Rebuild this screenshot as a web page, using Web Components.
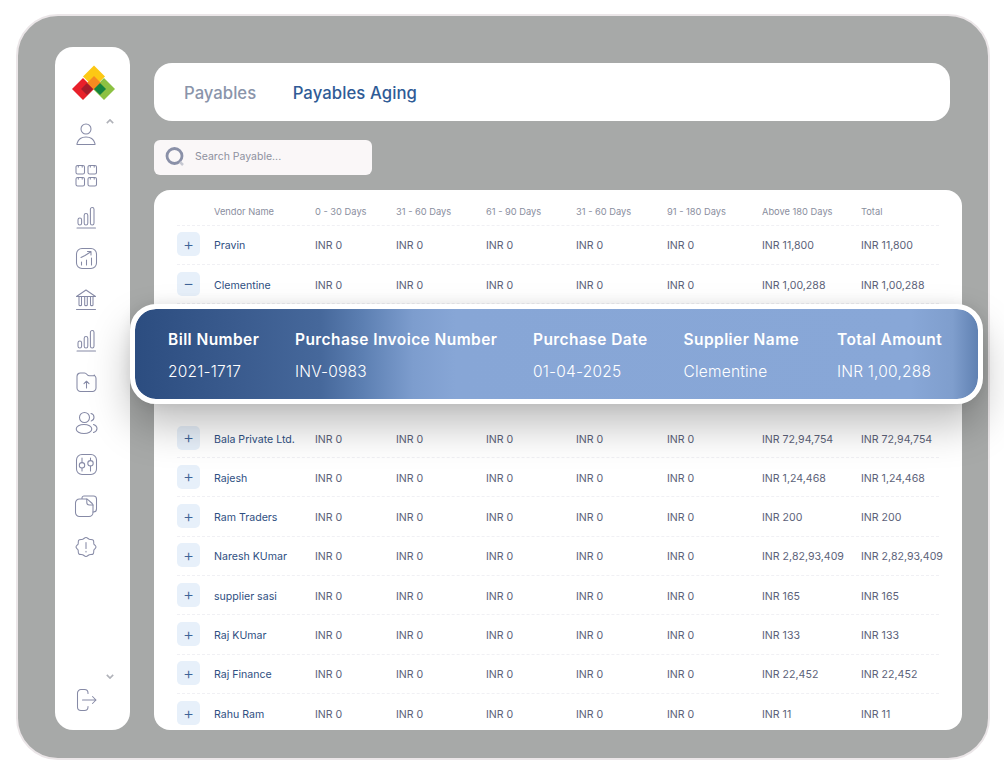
<!DOCTYPE html>
<html lang="en"><head><meta charset="utf-8"><title>Payables Aging</title>
<style>
html,body{margin:0;padding:0;background:#fff;font-family:Inter,"Liberation Sans",sans-serif;}
</style></head><body>
<x-frame>
  <x-sidebar slot="side"></x-sidebar>
  <x-tabs slot="main"><span>Payables</span><span active>Payables Aging</span></x-tabs>
  <x-search slot="main">Search Payable...</x-search>
  <x-table slot="main">
    <x-row head><span></span><span>Vendor Name</span><span>0 - 30 Days</span><span>31 - 60 Days</span><span>61 - 90 Days</span><span>31 - 60 Days</span><span>91 - 180 Days</span><span>Above 180 Days</span><span>Total</span></x-row>
    <x-row name="Pravin" above="INR 11,800"></x-row>
    <x-row name="Clementine" above="INR 1,00,288" open></x-row>
    <x-detail>
      <x-banner>
        <x-col><b>Bill Number</b><span>2021-1717</span></x-col>
        <x-col><b>Purchase Invoice Number</b><span>INV-0983</span></x-col>
        <x-col><b>Purchase Date</b><span>01-04-2025</span></x-col>
        <x-col><b>Supplier Name</b><span>Clementine</span></x-col>
        <x-col><b>Total Amount</b><span>INR 1,00,288</span></x-col>
      </x-banner>
    </x-detail>
    <x-row name="Bala Private Ltd." above="INR 72,94,754"></x-row>
    <x-row name="Rajesh" above="INR 1,24,468"></x-row>
    <x-row name="Ram Traders" above="INR 200"></x-row>
    <x-row name="Naresh KUmar" above="INR 2,82,93,409"></x-row>
    <x-row name="supplier sasi" above="INR 165"></x-row>
    <x-row name="Raj KUmar" above="INR 133"></x-row>
    <x-row name="Raj Finance" above="INR 22,452"></x-row>
    <x-row name="Rahu Ram" above="INR 11" last></x-row>
  </x-table>
</x-frame>
<script>
const def=(n,c)=>customElements.define(n,c);
const shadow=(el,html)=>{el.attachShadow({mode:'open'}).innerHTML=html;};
const ICONS={
person:'<circle cx="12" cy="7" r="5"/><path d="M3 22.5c0-.6 0-1 .2-1.5C4.300 17.500 7.800 15 12 15s7.700 2.500 8.800 6c.2.500.2.900.2 1.500z"/>',
grid:'<rect x="2" y="2.500" width="8.500" height="8.500" rx="1.600"/><path d="M4.300 2.500v1.600M8.200 2.500v1.600"/><rect x="14" y="2.500" width="8.500" height="8.500" rx="1.600"/><path d="M16.300 2.500v1.600M20.200 2.500v1.600"/><rect x="2" y="14.500" width="8.500" height="8.500" rx="1.600"/><path d="M4.300 14.500v1.600M8.200 14.500v1.600"/><rect x="14" y="14.500" width="8.500" height="8.500" rx="1.600"/><path d="M16.300 14.500v1.600M20.200 14.500v1.600"/>',
bars:'<rect x="4" y="13" width="3.600" height="7" rx="1.800"/><rect x="10.200" y="8.500" width="3.600" height="11.500" rx="1.800"/><rect x="16.400" y="2.500" width="3.600" height="17.500" rx="1.800"/><path d="M3 23h18.500"/>',
chart:'<rect x="2.500" y="2.500" width="20" height="20" rx="5.500"/><path d="M7 11.500 11 9.500 16.500 6M13.500 5.500h3.500v3.500M7.500 19v-3M12.500 19v-5M17.500 19v-7"/>',
bank:'<path d="M2.500 9.500 12 3l9.500 6.500z"/><path d="M5 9.500v8.500c0 1 2.500 1 2.500 0V9.500M10.700 9.500v8.500c0 1 2.600 1 2.600 0V9.500M16.500 9.500v8.500c0 1 2.500 1 2.500 0V9.500M2.500 22.500h19"/>',
folder:'<path d="M3 6.500A3.500 3.500 0 0 1 6.500 3h4c1.200 0 1.800.6 2.500 1.500s1.200 1.300 2.500 1.300H20l.3-.8.700 1c.8.8 1 1.500 1 2.500v9.500a3.500 3.500 0 0 1-3.500 3.500h-12A3.500 3.500 0 0 1 3 18z"/><path d="M12.500 18v-6.500M10 13.700l2.500-2.500 2.500 2.500"/>',
users:'<circle cx="10.500" cy="6.500" r="5"/><ellipse cx="10" cy="18" rx="7.800" ry="4.500"/><path d="M17 2.500c2 .4 3 2 3 3.800 0 1.700-1 3.200-2.800 3.700M19.500 13.500c2.200.8 3.500 2.400 3.500 4s-1.300 3.200-3.500 4"/>',
sliders:'<rect x="2.500" y="2.500" width="20" height="20" rx="5.500"/><path d="M8 6v4.500M8 16v3M16.500 6v2.500M16.500 14v5"/><circle cx="8" cy="13.300" r="2.700"/><circle cx="16.500" cy="11.300" r="2.700"/>',
note:'<path d="M8 4.500V4a2 2 0 0 1 2-2h9.500a3 3 0 0 1 3 3v10a3 3 0 0 1-3 3H19"/><path d="M5.500 5h7c.8 0 1.200.3 1.700.8l4 3.700c.5.500.8 1 .8 1.800V18.500a4 4 0 0 1-4 4H5.500a4 4 0 0 1-4-4V9a4 4 0 0 1 4-4z"/><path d="M12.800 5v3.500a2.500 2.500 0 0 0 2.500 2.500h3.700"/>',
alert:'<path d="M12 2.500c1.400 0 2.200 1.400 3.400 1.800 1.300.4 3-.1 3.800.9.900 1 .3 2.600.7 3.800.4 1.100 2.100 1.700 2.100 3s-1.700 1.900-2.100 3c-.4 1.200.2 2.800-.7 3.800-.8 1-2.500.5-3.800.9-1.200.4-2 1.800-3.400 1.800s-2.200-1.400-3.400-1.800c-1.300-.4-3 .1-3.800-.9-.9-1-.3-2.600-.7-3.800C3.700 13.900 2 13.300 2 12s1.700-1.900 2.100-3c.4-1.200-.2-2.800.7-3.800.8-1 2.500-.5 3.800-.9C9.800 3.900 10.600 2.500 12 2.500z"/><path d="M12 7.500v6M12 16.200v.8"/>',
logout:'<path d="M14 5.500V5a3.500 3.500 0 0 0-3.500-3.500H7A3.500 3.500 0 0 0 3.500 5v14A3.500 3.500 0 0 0 7 22.500h3.500A3.500 3.500 0 0 0 14 19v-.5"/><path d="M8.500 12H22M18.500 8.500 22 12l-3.500 3.500"/>'
};
def('x-icon',class extends HTMLElement{connectedCallback(){const n=this.getAttribute('name');shadow(this,`<style>:host{display:flex;align-items:center;justify-content:center;height:41.3px;width:24px}svg{width:24px;height:24px;fill:none;stroke:#868aa6;stroke-width:1.050;stroke-linecap:round;stroke-linejoin:round}</style><svg viewBox="0 0 24 24">${ICONS[n]}</svg>`);}});
def('x-frame',class extends HTMLElement{connectedCallback(){shadow(this,`<style>
:host{display:flex;box-sizing:border-box;width:974px;height:746px;margin:14px 0 0 16px;padding:31px 0 0 37px;gap:24px;background:#a7a9a8;border:2px solid #ebe6e8;border-radius:42px;}
.main{display:flex;flex-direction:column;width:808px;margin-top:16px}
</style><slot name="side"></slot><div class="main"><slot name="main"></slot></div>`);}});
def('x-sidebar',class extends HTMLElement{connectedCallback(){
const names=['person','grid','bars','chart','bank','bars','folder','users','sliders','note','alert'];
shadow(this,`<style>
:host{display:flex;flex-direction:column;position:relative;box-sizing:border-box;width:75px;height:683px;background:#fff;border-radius:18px;padding:18px 0 18px 19px}
.logo{width:46px;height:36px;margin:0 0 12.300px -3px;display:block}
.icons{display:flex;flex-direction:column}
.end{margin-top:auto}
.ch{position:absolute;left:51px;width:8px;height:5px;fill:none;stroke:#b0b2b9;stroke-width:2}
</style>
<svg class="logo" viewBox="72 65 44 36">
<polygon points="94,65.500 105,76.500 94,87.500 83,76.500" fill="#fcc814"/>
<polygon points="83,78 94,89 83,100 72,89" fill="#e8202a"/>
<polygon points="104,78 115,89 104,100 93,89" fill="#8cc142"/>
<polygon points="94,76 101,83 94,90 87,83" fill="#f58a20"/>
<polygon points="87,83 93,89 87,95 81,89" fill="#a51c2a"/>
<polygon points="100,83 106,89 100,95 94,89" fill="#14833f"/>
</svg>
<svg class="ch" style="top:72px" viewBox="0 0 10 6"><path d="M1 5l4-4 4 4"/></svg>
<div class="icons">${names.map(n=>`<x-icon name="${n}"></x-icon>`).join('')}</div>
<svg class="ch" style="top:627px" viewBox="0 0 10 6"><path d="M1 1l4 4 4-4"/></svg>
<x-icon name="logout" class="end" style="height:24px"></x-icon>`);}});
def('x-tabs',class extends HTMLElement{connectedCallback(){shadow(this,`<style>
:host{display:flex;align-items:center;gap:36.500px;box-sizing:border-box;width:796px;height:58px;padding:1px 30px 0;background:#fff;border-radius:18px;font:500 16.700px Inter,"Liberation Sans",sans-serif;color:#8a94aa;margin-bottom:19px}
::slotted([active]){color:#2f5b96;letter-spacing:.08px}
</style><slot></slot>`);}});
def('x-search',class extends HTMLElement{connectedCallback(){shadow(this,`<style>
:host{display:flex;align-items:center;gap:10px;box-sizing:border-box;width:218px;height:35px;padding:0 0 1px 11px;background:#faf7f8;border-radius:6px;font:400 10.500px Inter,"Liberation Sans",sans-serif;color:#8e919f;margin-bottom:15px}
svg{width:20px;height:20px;fill:none;flex:none}
span{margin-top:-1px}
</style><svg viewBox="0 0 20 20"><circle cx="9.500" cy="9" r="7.500" stroke="#8a90a8" stroke-width="2.800"/><path d="M15 15l3 3" stroke="#c6c8d2" stroke-width="2.500"/></svg><span><slot></slot></span>`);}});
def('x-table',class extends HTMLElement{connectedCallback(){shadow(this,`<style>
:host{display:block;box-sizing:border-box;width:808px;height:540px;padding:0 23px;background:#fff;border-radius:16px}
</style><slot></slot>`);}});
const COLS='37px 101px 81px 90px 90px 91px 95px 99px 78px';
def('x-row',class extends HTMLElement{connectedCallback(){
const head=this.hasAttribute('head'),name=this.getAttribute('name'),above=this.getAttribute('above');
const body=head?'<slot></slot>':`<span class="btn">${this.hasAttribute('open')?'−':'+'}</span><span class="name">${name}</span>${'<span>INR 0</span>'.repeat(5)}<span>${above}</span><span>${above}</span>`;
shadow(this,`<style>
:host{display:grid;grid-template-columns:${COLS};align-items:center;box-sizing:border-box;height:${head?35.6:39.3}px;${head?'padding-top:8px;font-size:9.300px;color:#8a8e9e;':'font-size:10.600px;color:#5c6279;padding-top:2px;'}font-family:Inter,"Liberation Sans",sans-serif;white-space:nowrap;border-bottom:${this.hasAttribute('last')?'0':'1px dashed #f0f0f4'}}
.btn{display:flex;align-items:center;justify-content:center;width:23px;height:24px;margin-top:-3px;border-radius:5px;background:#e7f0fa;color:#3f6498;font-size:17px;font-weight:300;line-height:1}
.name{color:#2f4f82}
</style>${body}`);}});
def('x-detail',class extends HTMLElement{connectedCallback(){shadow(this,`<style>
:host{display:block;position:relative;height:114.700px}
</style><slot></slot>`);}});
def('x-banner',class extends HTMLElement{connectedCallback(){shadow(this,`<style>
:host{position:absolute;z-index:2;left:-47px;top:0;box-sizing:border-box;display:flex;align-items:center;width:853px;height:100px;padding:2px 0 0 33px;border:5px solid #fff;border-radius:26px;
background:linear-gradient(90deg,#2c4d80 0%,#3a5b8e 12%,#46689b 22%,#5c7fb2 27%,#7d9dce 33%,#87a6d6 38%,#88a7d7 92%,#7f9ecd 97%,#6081b2 100%) padding-box,#fff;
box-shadow:0 22px 40px rgba(0,0,0,.25),0 0 14px rgba(0,0,0,.08);color:#fff;font-family:Inter,"Liberation Sans",sans-serif}
::slotted(x-col:nth-child(1)){width:127px}
::slotted(x-col:nth-child(2)){width:238px}
::slotted(x-col:nth-child(3)){width:150.500px}
::slotted(x-col:nth-child(4)){width:153.500px}
</style><slot></slot>`);}});
def('x-col',class extends HTMLElement{connectedCallback(){shadow(this,`<style>
:host{display:flex;flex-direction:column;gap:13px;white-space:nowrap;flex:none}
::slotted(b){font-size:15.500px;font-weight:600;line-height:19px;letter-spacing:.43px}
::slotted(span){font-size:15.500px;font-weight:300;line-height:19px;letter-spacing:.2px}
</style><slot></slot>`);}});
</script></body></html>
